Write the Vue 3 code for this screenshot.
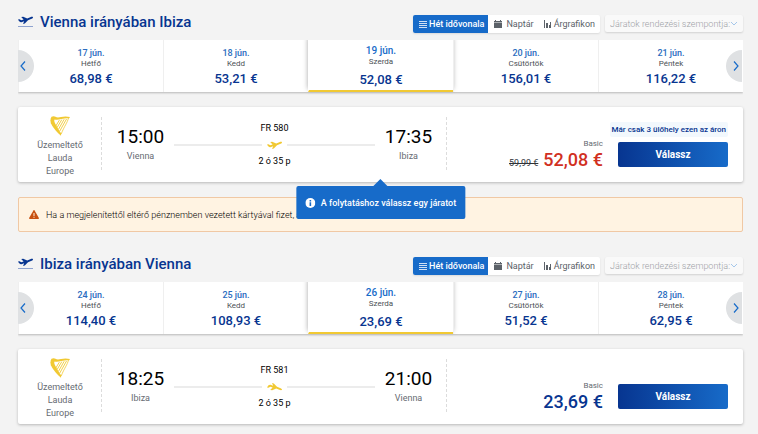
<script setup>
const planePath =
  'M0 3.6L1.4 3.200 3.400 4.300 5.600 3.600 3.200 1.100 5.200.8l4 1.700 3.100-1.300c1.300-.6 2.500-.5 2.700 0 .1.8-1 1.400-2 1.800l-3 1.300-3.200 3.300L5 8l1.200-2.700-2.800.9C2.200 6.400 1.200 5.800 0 3.600z'

const trips = [
  {
    id: 'out',
    title: 'Vienna irányában Ibiza',
    days: [
      { date: '17 jún.', day: 'Hétfő', price: '68,98 €' },
      { date: '18 jún.', day: 'Kedd', price: '53,21 €' },
      { date: '19 jún.', day: 'Szerda', price: '52,08 €', selected: true },
      { date: '20 jún.', day: 'Csütörtök', price: '156,01 €' },
      { date: '21 jún.', day: 'Péntek', price: '116,22 €' },
    ],
    flight: {
      number: 'FR 580',
      duration: '2 ó 35 p',
      departs: '15:00',
      from: 'Vienna',
      arrives: '17:35',
      to: 'Ibiza',
      oldPrice: '59,99 €',
      price: '52,08 €',
      seats: 'Már csak 3 ülőhely ezen az áron',
    },
    warning: 'Ha a megjelenítettől eltérő pénznemben vezetett kártyával fizet, a',
    tooltip: 'A folytatáshoz válassz egy járatot',
  },
  {
    id: 'back',
    title: 'Ibiza irányában Vienna',
    days: [
      { date: '24 jún.', day: 'Hétfő', price: '114,40 €' },
      { date: '25 jún.', day: 'Kedd', price: '108,93 €' },
      { date: '26 jún.', day: 'Szerda', price: '23,69 €', selected: true },
      { date: '27 jún.', day: 'Csütörtök', price: '51,52 €' },
      { date: '28 jún.', day: 'Péntek', price: '62,95 €' },
    ],
    flight: {
      number: 'FR 581',
      duration: '2 ó 35 p',
      departs: '18:25',
      from: 'Ibiza',
      arrives: '21:00',
      to: 'Vienna',
      price: '23,69 €',
      landing: true,
    },
  },
]
</script>

<template>
  <main class="page">
    <section v-for="trip in trips" :key="trip.id" class="trip">
      <header class="head">
        <svg class="head-icon" viewBox="0 0 15 12" aria-hidden="true">
          <path class="plane" :d="planePath" />
          <path class="ground" d="M0 10.500h15" />
        </svg>
        <h2 class="title">{{ trip.title }}</h2>
        <div class="views">
          <button type="button" class="view active">
            <svg class="view-icon" viewBox="0 0 8 8" aria-hidden="true"><path d="M0 1.500h8M0 3.500h8M0 5.500h8M0 7.500h8" stroke="currentColor" stroke-opacity=".8" /></svg>
            Hét idővonala
          </button>
          <button type="button" class="view spaced">
            <svg class="view-icon" viewBox="0 0 8 8" aria-hidden="true"><path d="M0 1h1V0h1v1h4V0h1v1h1v1.500H0zM0 3h8v5H0z" fill="currentColor" /></svg>
            Naptár
          </button>
          <button type="button" class="view">
            <svg class="view-icon" viewBox="0 0 8 8" aria-hidden="true"><path d="M0 0h1v8H0zM2 3h2v5H2zM5 5h1v3H5zM6 2h1v6H6z" fill="currentColor" /></svg>
            Árgrafikon
          </button>
        </div>
        <div class="sort">
          <select class="sort-select" aria-label="Járatok rendezési szempontja" disabled>
            <option>Járatok rendezési szempontja:</option>
          </select>
          <svg class="sort-arrow" viewBox="0 0 8 5" aria-hidden="true"><path d="M1 1l3 3 3-3" /></svg>
        </div>
      </header>

      <div class="strip">
        <button v-for="d in trip.days" :key="d.date" type="button" class="day" :class="{ selected: d.selected }">
          <span class="date">{{ d.date }}</span>
          <span class="weekday">{{ d.day }}</span>
          <span class="day-price">{{ d.price }}</span>
        </button>
        <button type="button" class="arrow prev" aria-label="‹">
          <svg viewBox="0 0 6 10"><path d="M5 .5L1 5l4 4.500" /></svg>
        </button>
        <button type="button" class="arrow next" aria-label="›">
          <svg viewBox="0 0 6 10"><path d="M1 .5L5 5 1 9.500" /></svg>
        </button>
      </div>

      <article class="card">
        <div class="operator">
          <svg class="harp" viewBox="0 0 20 20" aria-hidden="true">
            <path class="fill" d="M1.500.7C3 0 4.500 0 5.500.8c1.500.9 3.500.6 5.500.2 3-.6 6-.7 9 .1l-.8 1.100c-2.700-.2-5.200.1-7.700.8-2.800.8-5 1-6.800.5C4 4 4.200 5.400 4.900 7c1.200 2.600 3.300 6 6.300 10.600l-.2 2.200C7.500 16.800 3 11.700 1.300 8 .3 7.200 1 6.200.5 5.200 0 4.400.9 4 .6 2.800z" />
            <path class="line" d="M18.500 2c-1.200 5-4.200 8-7.300 16" />
            <path class="string" d="M16.500 3L9.800 15M14.200 3.200L8.500 13.300M11.800 3.600L7 11.700M9.400 4.100L5.800 10" />
          </svg>
          <span>Üzemeltető<br>Lauda<br>Europe</span>
        </div>
        <div class="route">
          <div class="stop">
            <strong class="time">{{ trip.flight.departs }}</strong>
            <span class="city">{{ trip.flight.from }}</span>
          </div>
          <div class="path">
            <span>{{ trip.flight.number }}</span>
            <div class="track">
              <svg class="track-icon" :class="{ landing: trip.flight.landing }" viewBox="0 0 15 8" aria-hidden="true">
                <path :d="planePath" />
              </svg>
            </div>
            <span>{{ trip.flight.duration }}</span>
          </div>
          <div class="stop">
            <strong class="time">{{ trip.flight.arrives }}</strong>
            <span class="city">{{ trip.flight.to }}</span>
          </div>
        </div>
        <div class="fare">
          <div class="amount">
            <span class="plan">Basic</span>
            <div class="prices">
              <s v-if="trip.flight.oldPrice" class="old">{{ trip.flight.oldPrice }}</s>
              <strong class="price" :class="{ sale: trip.flight.oldPrice }">{{ trip.flight.price }}</strong>
            </div>
          </div>
          <div class="action">
            <span v-if="trip.flight.seats" class="seats">{{ trip.flight.seats }}</span>
            <button type="button" class="choose">Válassz</button>
          </div>
        </div>
        <div v-if="trip.tooltip" class="tooltip" role="tooltip">
          <svg class="info" viewBox="0 0 10 10" aria-hidden="true"><circle cx="5" cy="5" r="5" fill="#fff" /><path d="M4.200 2h1.600v1.500H4.200zM4.200 4.200h1.600V8H4.200z" fill="#176bc9" /></svg>
          {{ trip.tooltip }}
        </div>
      </article>

      <p v-if="trip.warning" class="warning">
        <svg class="warning-icon" viewBox="0 0 10 9" aria-hidden="true"><path d="M4.400.4q.6-.8 1.200 0L9.900 8q.2 1-.7 1H.8Q-.1 9 .1 8z" fill="#c8500f" /><path d="M4.500 3h1v3h-1zM4.500 6.800h1v1h-1z" fill="#fff3e2" /></svg>
        {{ trip.warning }}
      </p>
    </section>
  </main>
</template>

<style>
body {
  background: #f3f3f3;
}
</style>

<style scoped>
.page {
  padding: 12px 15px 10px 18px;
  font-family: Roboto, "Liberation Sans", sans-serif;
  font-size: 9px;
  line-height: 12px;
  color: #2e3237;
}
button {
  font: inherit;
  border: 0;
  margin: 0;
  padding: 0;
  background: none;
  color: inherit;
}
.trip + .trip {
  margin-top: 22px;
}
.head {
  display: flex;
  align-items: center;
  height: 20px;
  margin-bottom: 8px;
}
.head-icon {
  width: 15px;
  height: 12px;
  margin-right: 7px;
}
.plane {
  fill: #073590;
}
.ground {
  stroke: #8fa3cf;
}
.title {
  flex: 1;
  margin: 0;
  font-size: 15px;
  line-height: 20px;
  font-weight: 500;
  color: #073590;
}
.views {
  display: flex;
  height: 18px;
  margin: 3px 5px 0 0;
  border-radius: 2px;
  background: #fff;
  box-shadow: 0 1px 2px rgba(0, 0, 0, 0.1);
}
.view {
  display: flex;
  align-items: center;
  gap: 2px;
  padding: 0 5px 0 6px;
  color: #5c6269;
}
.view.spaced {
  gap: 4px;
  padding-right: 4px;
}
.view.active {
  padding-right: 4px;
  background: #176bc9;
  color: #fff;
  font-weight: 500;
  border-radius: 2px 0 0 2px;
}
.view-icon {
  width: 8px;
  height: 8px;
}
.sort {
  position: relative;
  margin-top: 3px;
  width: 138px;
  height: 17px;
}
.sort-select {
  appearance: none;
  width: 100%;
  height: 17px;
  padding: 0 5px;
  border: 0;
  border-radius: 2px;
  background: #f9f9f9;
  box-shadow: 0 1px 2px rgba(0, 0, 0, 0.14);
  font: inherit;
  font-weight: 300;
  color: #9ea2a7;
  opacity: 1;
}
.sort-arrow {
  position: absolute;
  right: 5px;
  top: 6px;
  width: 8px;
  height: 5px;
  fill: none;
  stroke: #a5c7ea;
}
.strip {
  position: relative;
  display: grid;
  grid-template-columns: repeat(5, 1fr);
  height: 52px;
  background: #fff;
  box-shadow: 0 1px 2px rgba(0, 0, 0, 0.25);
  clip-path: inset(0 0 -4px 0);
}
.day {
  display: flex;
  flex-direction: column;
  align-items: center;
  padding-top: 7px;
  border-left: 1px solid #efefef;
}
.day.selected {
  padding-top: 5px;
  border-left-color: #fff;
  border-bottom: 2px solid #f1c933;
  background: #fff;
  box-shadow: 0 -3px 5px rgba(0, 0, 0, 0.35);
}
.date {
  font-weight: 500;
  color: #2a6cc0;
}
.selected .date {
  font-size: 10px;
  color: #176bc9;
}
.weekday {
  font-size: 8px;
  line-height: 9px;
  color: #4c5156;
}
.day-price {
  margin-top: 3px;
  font-size: 13px;
  line-height: 16px;
  font-weight: 500;
  color: #073590;
}
.selected .day-price {
  margin-top: 6px;
}
.arrow {
  position: absolute;
  top: 10px;
  width: 16px;
  height: 32px;
  display: flex;
  align-items: center;
  background: #dfe1e3;
}
.arrow svg {
  width: 6px;
  height: 10px;
  fill: none;
  stroke: #176bc9;
  stroke-width: 1.2;
}
.prev {
  left: 0;
  padding-left: 2px;
  border-radius: 0 16px 16px 0;
}
.next {
  right: 1px;
  padding-left: 7px;
  border-radius: 16px 0 0 16px;
}
.card {
  position: relative;
  display: flex;
  height: 75px;
  margin-top: 15px;
  background: #fff;
  border-radius: 2px;
  box-shadow: 0 1px 3px rgba(0, 0, 0, 0.25);
}
.operator,
.route {
  background: repeating-linear-gradient(#dcdcdc 0 3px, transparent 3px 5px) right 10px / 1px 55px no-repeat;
}
.operator {
  display: flex;
  flex-direction: column;
  align-items: center;
  gap: 3px;
  width: 84px;
  padding-top: 9px;
  box-sizing: border-box;
  text-align: center;
  line-height: 13px;
  color: #666b72;
}
.harp {
  width: 20px;
  height: 20px;
  fill: none;
  stroke: #f1c933;
}
.harp .fill {
  fill: #f1c933;
  stroke: none;
}
.harp .string {
  stroke-width: 0.9;
}
.harp .line {
  stroke-width: 0.8;
}
.route {
  flex: 1;
  display: flex;
  gap: 10px;
  padding: 0 15px;
}
.stop {
  display: flex;
  flex-direction: column;
  align-items: center;
  width: 47px;
  padding-top: 18px;
}
.time {
  font-size: 19px;
  line-height: 24px;
  font-weight: 400;
  color: #000;
}
.city {
  color: #666b72;
  line-height: 14px;
}
.path {
  flex: 1;
  display: flex;
  flex-direction: column;
  align-items: center;
  padding-top: 15px;
  color: #000;
}
.track {
  display: flex;
  align-items: center;
  gap: 5px;
  width: 100%;
  height: 21px;
}
.track::before,
.track::after {
  content: "";
  flex: 1;
  height: 2px;
  background: #ececec;
}
.track-icon {
  width: 15px;
  height: 8px;
  fill: #f1c933;
}
.track-icon.landing {
  transform: scaleY(-1);
}
.fare {
  display: flex;
  width: 281px;
  gap: 15px;
  padding-right: 15px;
}
.amount {
  flex: 1;
  padding-top: 32px;
  text-align: right;
}
.plan {
  display: block;
  font-size: 8px;
  line-height: 9px;
  color: #666b72;
}
.prices {
  display: flex;
  justify-content: flex-end;
  align-items: baseline;
  gap: 5px;
}
.old {
  color: #2e3237;
}
.price {
  font-size: 18px;
  line-height: 24px;
  font-weight: 500;
  color: #073590;
}
.price.sale {
  color: #d1301f;
}
.action {
  display: flex;
  flex-direction: column;
  align-items: flex-end;
  justify-content: flex-end;
  gap: 5px;
  width: 110px;
  padding-bottom: 15px;
}
.seats {
  padding: 0 2px;
  border-radius: 2px;
  background: #f2f8fd;
  font-size: 8px;
  line-height: 15px;
  font-weight: 500;
  color: #073590;
  white-space: nowrap;
}
.choose {
  width: 110px;
  height: 25px;
  border-radius: 2px;
  background: linear-gradient(90deg, #073590, #176bc9);
  color: #fff;
  font-size: 10px;
  font-weight: 700;
}
.tooltip {
  position: absolute;
  z-index: 1;
  top: 79px;
  left: 50%;
  display: flex;
  align-items: center;
  gap: 6px;
  height: 33px;
  padding: 0 9px;
  transform: translateX(-50%);
  border-radius: 2px;
  background: #176bc9;
  color: #fff;
  font-weight: 500;
  white-space: nowrap;
}
.tooltip::before {
  content: "";
  position: absolute;
  left: 50%;
  bottom: 100%;
  margin-left: -7px;
  border: 7px solid transparent;
  border-top: 0;
  border-bottom-color: #176bc9;
}
.info {
  width: 10px;
  height: 10px;
}
.warning {
  display: flex;
  align-items: center;
  gap: 7px;
  height: 35px;
  margin: 15px 0 0;
  padding: 0 10px;
  box-sizing: border-box;
  border: 1px solid #f0c8a4;
  border-radius: 2px;
  background: #fff3e2;
  font-weight: 300;
  color: #000;
}
.warning-icon {
  width: 10px;
  height: 9px;
}
</style>
